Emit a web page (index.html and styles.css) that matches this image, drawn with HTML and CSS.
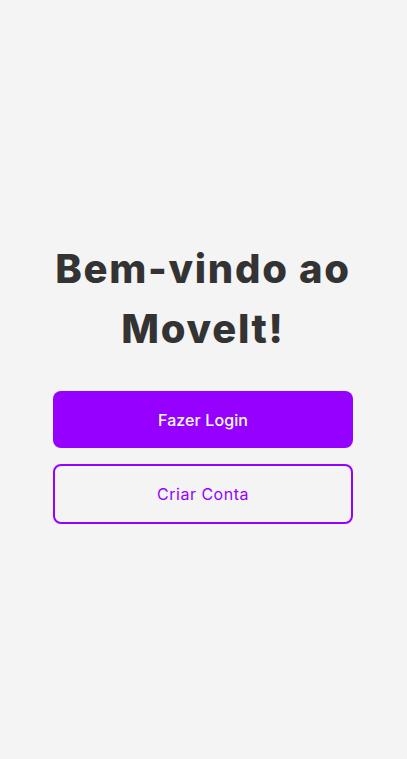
FILE: index.html
```html
<!DOCTYPE html>
<html lang="pt-BR">
<head>
<meta charset="utf-8">
<title>MoveIt</title>
<link rel="stylesheet" href="styles.css">
</head>
<body>
<main class="page">
  <section class="welcome">
    <h1 class="welcome-title">Bem-vindo ao MoveIt!</h1>
    <div class="actions">
      <button class="btn btn-primary" type="button">Fazer Login</button>
      <button class="btn btn-outline" type="button">Criar Conta</button>
    </div>
  </section>
</main>
</body>
</html>
```
FILE: styles.css
```css
* { box-sizing: border-box; }
html, body { margin: 0; padding: 0; }
body {
  background: #f4f4f4;
  font-family: Inter, "Noto Sans", sans-serif;
  color: #333;
}
.page {
  min-height: 100vh;
  display: flex;
  align-items: center;
  justify-content: center;
  padding-right: 1px;
}
.welcome {
  width: 300px;
  display: flex;
  flex-direction: column;
  padding-top: 4px;
}
.welcome-title {
  margin: 0 0 32px;
  font-size: 40px;
  line-height: 60px;
  font-weight: 800;
  text-align: center;
  color: #333333;
  letter-spacing: 1.7px;
}
.actions {
  display: flex;
  flex-direction: column;
  gap: 16px;
}
.btn {
  width: 300px;
  font-family: Inter, "Noto Sans", sans-serif;
  font-size: 16px;
  border-radius: 8px;
  cursor: pointer;
}
.btn-primary {
  height: 57px;
  background: #9600ff;
  color: #ffffff;
  border: none;
  font-weight: 500;
  letter-spacing: 0.1px;
}
.btn-outline {
  height: 60px;
  background: transparent;
  color: #9600ff;
  border: 2px solid #9600ff;
  font-weight: 400;
  letter-spacing: 0.5px;
}
```
